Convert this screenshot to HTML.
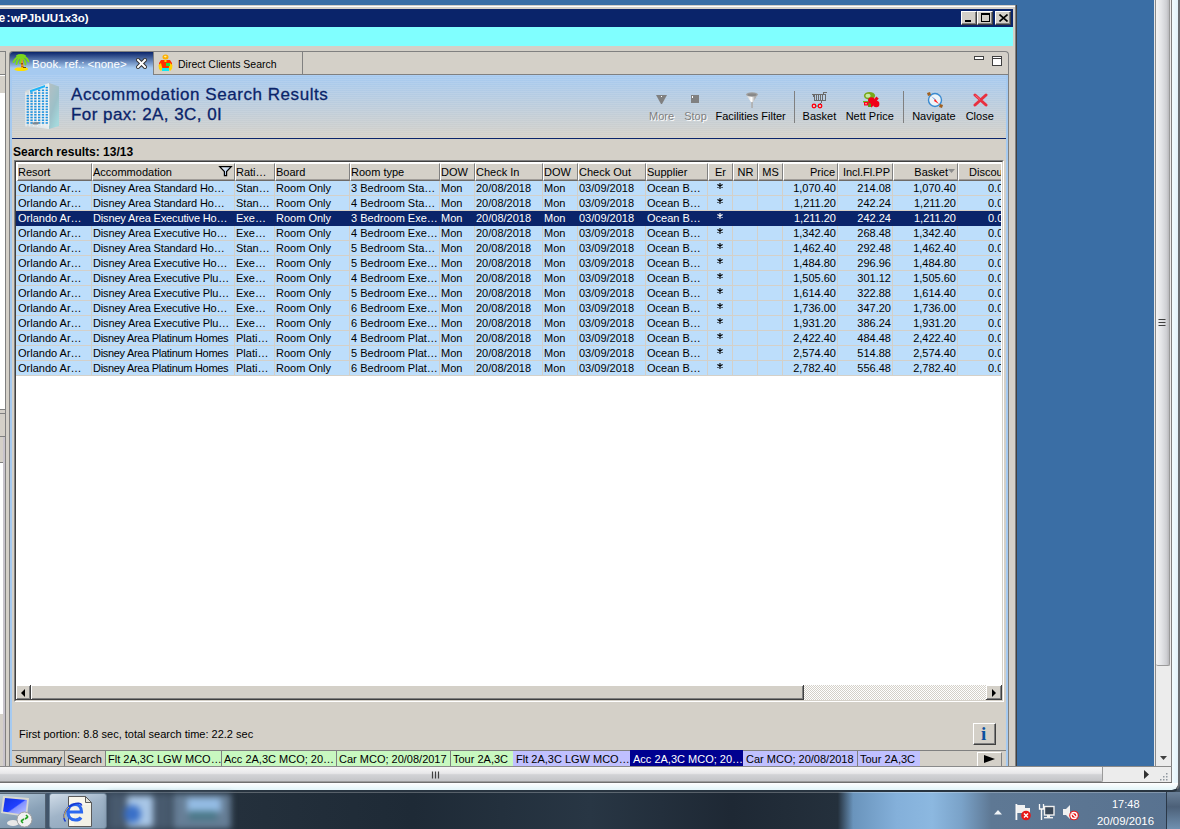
<!DOCTYPE html>
<html><head><meta charset="utf-8"><style>
*{margin:0;padding:0;box-sizing:border-box}
html,body{width:1180px;height:829px;overflow:hidden;background:#3a6ea5;font-family:"Liberation Sans",sans-serif;font-size:11px;color:#000}
.a{position:absolute}
.t{position:absolute;white-space:nowrap;line-height:14px}
.b3{background:#d4d0c8;border-top:1px solid #fff;border-left:1px solid #fff;border-right:1px solid #404040;border-bottom:1px solid #404040;box-shadow:inset -1px -1px 0 #808080}
.sb{background:#d4d0c8;border-right:1px solid #404040;border-bottom:1px solid #404040;box-shadow:inset 1px 1px 0 #fff,inset -1px -1px 0 #808080}
</style></head><body>

<div class="a" style="left:0px;top:5px;width:1017px;height:761px;background:#d4d0c8"></div>
<div class="a" style="left:0px;top:6px;width:1015px;height:1px;background:#fff"></div>
<div class="a" style="left:1015px;top:5px;width:1px;height:761px;background:#808080"></div>
<div class="a" style="left:1016px;top:5px;width:1px;height:761px;background:#404040"></div>
<div class="a" style="left:0px;top:9px;width:1013px;height:18px;background:#0a246a"></div>
<div class="t" style="left:-1.5px;top:11px;color:#fff;font-weight:bold;font-size:12px;line-height:14px">e</div>
<div class="t" style="left:6.5px;top:11px;color:#fff;font-weight:bold;font-size:12px;line-height:14px">:</div>
<div class="t" style="left:11px;top:11px;color:#fff;font-weight:bold;font-size:11.5px;line-height:14px;letter-spacing:0.1px">wPJbUU1x3o)</div>
<div class="a b3" style="left:961px;top:11px;width:16px;height:14px;"></div>
<div class="a b3" style="left:977px;top:11px;width:16px;height:14px;"></div>
<div class="a b3" style="left:995px;top:11px;width:16px;height:14px;"></div>
<div class="a" style="left:965px;top:20px;width:6px;height:2px;background:#000"></div>
<div class="a" style="left:981px;top:13px;width:9px;height:9px;border:1px solid #000;border-top-width:2px"></div>
<svg class="a" style="left:999px;top:14px" width="9" height="8"><path d="M0.5 0.5L8.5 7.5M8.5 0.5L0.5 7.5" stroke="#000" stroke-width="1.6"/></svg>
<div class="a" style="left:0px;top:27px;width:1013px;height:19px;background:#80ffff"></div>
<div class="a" style="left:5px;top:51px;width:1px;height:715px;background:#808080"></div>
<div class="a" style="left:0px;top:51px;width:5px;height:1px;background:#808080"></div>
<div class="a" style="left:0px;top:74px;width:5px;height:1px;background:#808080"></div>
<div class="a" style="left:0px;top:75px;width:5px;height:1px;background:#fff"></div>
<div class="a" style="left:0px;top:93px;width:5px;height:316px;background:#fff"></div>
<div class="a" style="left:0px;top:409px;width:5px;height:1px;background:#808080"></div>
<div class="a" style="left:0px;top:413px;width:5px;height:1px;background:#808080"></div>
<div class="a" style="left:0px;top:436px;width:5px;height:1px;background:#808080"></div>
<div class="a" style="left:0px;top:462px;width:3px;height:1px;background:#808080"></div>
<div class="a" style="left:0px;top:463px;width:3px;height:251px;background:#fff"></div>
<div class="a" style="left:3px;top:437px;width:2px;height:329px;background:#c8c4cc"></div>
<div class="a" style="left:9px;top:51px;width:1000px;height:715px;background:#d4d0c8;border-left:1px solid #808080;border-top:1px solid #808080;border-right:1px solid #808080;border-top-left-radius:4px;border-top-right-radius:4px"></div>
<div class="a" style="left:10px;top:74px;width:998px;height:1px;background:#808080"></div>
<div class="a" style="left:10px;top:52px;width:143px;height:23px;background:linear-gradient(#0a246a 0px,#a6caf0 16px);border-top-left-radius:3px"></div>
<div class="a" style="left:153px;top:52px;width:1px;height:22px;background:#808080"></div>
<div class="a" style="left:302px;top:52px;width:1px;height:22px;background:#808080"></div>
<div class="t" style="left:32px;top:57px;color:#fff;font-size:11.5px">Book. ref.: &lt;none&gt;</div>
<svg class="a" style="left:136px;top:58px" width="11" height="11"><path d="M2 2L9 9M9 2L2 9" stroke="#303030" stroke-width="4" stroke-linecap="square"/><path d="M2 2L9 9M9 2L2 9" stroke="#fff" stroke-width="2" stroke-linecap="square"/></svg>
<svg class="a" style="left:12px;top:53px" width="18" height="19" viewBox="0 0 18 19">
<path d="M9.5 6 C9.5 9 10.5 12 10.5 15" stroke="#e8a018" stroke-width="2.4" fill="none"/>
<rect x="9" y="10" width="2" height="1.5" fill="#a04a10"/><rect x="9.3" y="13" width="2" height="1.2" fill="#c06010"/>
<g fill="none" stroke="#7ad81c" stroke-width="2" stroke-linecap="round">
<path d="M9 4 C6 3.5 3 5.5 1.5 9"/>
<path d="M9 4.5 C6.5 5 5 7 4.5 11"/>
<path d="M9.5 4 C12 3 15 4.5 16.5 8.5"/>
<path d="M9.5 4.5 C12 5.5 13.5 8 13.5 11.5"/>
<path d="M9 4.5 C9 6 8.5 8 8 10"/>
<path d="M5 3 C7 1.5 11 1.5 13 3"/>
</g>
<path d="M2.5 16 L5 14.5 L14 14.5 L16 15.5 L15.5 17 L12 18 L6 18 L2.5 17 Z" fill="#ffe000"/>
<rect x="11" y="14" width="3" height="1" fill="#705000"/>
</svg>
<svg class="a" style="left:158px;top:54px" width="16" height="18" viewBox="0 0 16 18">
<ellipse cx="7.5" cy="3" rx="3" ry="2.5" fill="#ffb000"/>
<ellipse cx="7.3" cy="2.6" rx="1.3" ry="0.8" fill="#fff0a0"/>
<path d="M3 6 L12 6 L14 9 L14 13 L12 15 L3 15 L1 13 L1 9 Z" fill="#ff3000"/>
<rect x="6.5" y="6" width="2" height="2" fill="#ffd000"/>
<path d="M0.5 11 L3 9 L4.5 15 L3 17 L1 15 Z" fill="#ffd000"/>
<path d="M14.5 11 L12 9 L10.5 15 L12 17 L14 15 Z" fill="#ffd000"/>
<rect x="8" y="9" width="4" height="3" fill="#20e040"/>
<rect x="4" y="14" width="7" height="3" fill="#10e8f0"/>
</svg>
<div class="t" style="left:178px;top:57px;font-size:10.5px">Direct Clients Search</div>
<div class="a" style="left:974px;top:56px;width:10px;height:4px;border:1px solid #404040;background:#fff"></div>
<div class="a" style="left:992px;top:56px;width:10px;height:10px;border:1px solid #404040;background:#fff"></div>
<div class="a" style="left:993px;top:58px;width:8px;height:1px;background:#404040"></div>
<div class="a" style="left:10px;top:75px;width:998px;height:63px;background:linear-gradient(#a6caf0,#d4d0c8)"></div>
<div class="a" style="left:10px;top:75px;width:998px;height:63px;background:repeating-linear-gradient(rgba(255,255,255,0.10) 0 1px,rgba(0,0,0,0.0) 1px 2px)"></div>
<div class="a" style="left:12px;top:138px;width:996px;height:1px;background:#0a246a"></div>
<svg class="a" style="left:24px;top:82px" width="36" height="48" viewBox="0 0 36 48">
<defs>
<linearGradient id="bside" x1="0" y1="0" x2="0.6" y2="1"><stop offset="0" stop-color="#b4c0c4"/><stop offset="0.6" stop-color="#9cc0c8"/><stop offset="1" stop-color="#a4d8dc"/></linearGradient>
<linearGradient id="bfront" x1="0" x2="1"><stop offset="0" stop-color="#d0d8dc"/><stop offset="1" stop-color="#e8eef0"/></linearGradient>
</defs>
<path d="M1 9 L25 1 L25 47 L1 44 Z" fill="url(#bfront)"/>
<path d="M25 1 L35 4.5 L35 44 L25 47 Z" fill="url(#bside)"/>
<rect x="1.60" y="10.50" width="0.9" height="34.0" fill="#f4f8fa"/><rect x="5.40" y="9.15" width="0.9" height="35.2" fill="#f4f8fa"/><rect x="9.20" y="7.80" width="0.9" height="36.4" fill="#f4f8fa"/><rect x="13.00" y="6.45" width="0.9" height="37.6" fill="#f4f8fa"/><rect x="16.80" y="5.10" width="0.9" height="38.8" fill="#f4f8fa"/><rect x="20.60" y="3.75" width="0.9" height="40.0" fill="#f4f8fa"/><rect x="24.40" y="2.40" width="0.9" height="41.2" fill="#f4f8fa"/>
<g fill="#1890e0"><rect x="2.60" y="40.20" width="2.3" height="1.5"/><rect x="2.60" y="37.48" width="2.3" height="1.5"/><rect x="2.60" y="34.76" width="2.3" height="1.5"/><rect x="2.60" y="32.04" width="2.3" height="1.5"/><rect x="2.60" y="29.32" width="2.3" height="1.5"/><rect x="2.60" y="26.60" width="2.3" height="1.5"/><rect x="2.60" y="23.88" width="2.3" height="1.5"/><rect x="2.60" y="21.16" width="2.3" height="1.5"/><rect x="2.60" y="18.44" width="2.3" height="1.5"/><rect x="2.60" y="15.72" width="2.3" height="1.5"/><rect x="2.60" y="13.00" width="2.3" height="1.5"/><rect x="6.40" y="40.20" width="2.3" height="1.5"/><rect x="6.40" y="37.48" width="2.3" height="1.5"/><rect x="6.40" y="34.76" width="2.3" height="1.5"/><rect x="6.40" y="32.04" width="2.3" height="1.5"/><rect x="6.40" y="29.32" width="2.3" height="1.5"/><rect x="6.40" y="26.60" width="2.3" height="1.5"/><rect x="6.40" y="23.88" width="2.3" height="1.5"/><rect x="6.40" y="21.16" width="2.3" height="1.5"/><rect x="6.40" y="18.44" width="2.3" height="1.5"/><rect x="6.40" y="15.72" width="2.3" height="1.5"/><rect x="6.40" y="13.00" width="2.3" height="1.5"/><rect x="6.40" y="10.28" width="2.3" height="1.5"/><rect x="10.20" y="40.20" width="2.3" height="1.5"/><rect x="10.20" y="37.48" width="2.3" height="1.5"/><rect x="10.20" y="34.76" width="2.3" height="1.5"/><rect x="10.20" y="32.04" width="2.3" height="1.5"/><rect x="10.20" y="29.32" width="2.3" height="1.5"/><rect x="10.20" y="26.60" width="2.3" height="1.5"/><rect x="10.20" y="23.88" width="2.3" height="1.5"/><rect x="10.20" y="21.16" width="2.3" height="1.5"/><rect x="10.20" y="18.44" width="2.3" height="1.5"/><rect x="10.20" y="15.72" width="2.3" height="1.5"/><rect x="10.20" y="13.00" width="2.3" height="1.5"/><rect x="10.20" y="10.28" width="2.3" height="1.5"/><rect x="14.00" y="40.20" width="2.3" height="1.5"/><rect x="14.00" y="37.48" width="2.3" height="1.5"/><rect x="14.00" y="34.76" width="2.3" height="1.5"/><rect x="14.00" y="32.04" width="2.3" height="1.5"/><rect x="14.00" y="29.32" width="2.3" height="1.5"/><rect x="14.00" y="26.60" width="2.3" height="1.5"/><rect x="14.00" y="23.88" width="2.3" height="1.5"/><rect x="14.00" y="21.16" width="2.3" height="1.5"/><rect x="14.00" y="18.44" width="2.3" height="1.5"/><rect x="14.00" y="15.72" width="2.3" height="1.5"/><rect x="14.00" y="13.00" width="2.3" height="1.5"/><rect x="14.00" y="10.28" width="2.3" height="1.5"/><rect x="14.00" y="7.56" width="2.3" height="1.5"/><rect x="17.80" y="40.20" width="2.3" height="1.5"/><rect x="17.80" y="37.48" width="2.3" height="1.5"/><rect x="17.80" y="34.76" width="2.3" height="1.5"/><rect x="17.80" y="32.04" width="2.3" height="1.5"/><rect x="17.80" y="29.32" width="2.3" height="1.5"/><rect x="17.80" y="26.60" width="2.3" height="1.5"/><rect x="17.80" y="23.88" width="2.3" height="1.5"/><rect x="17.80" y="21.16" width="2.3" height="1.5"/><rect x="17.80" y="18.44" width="2.3" height="1.5"/><rect x="17.80" y="15.72" width="2.3" height="1.5"/><rect x="17.80" y="13.00" width="2.3" height="1.5"/><rect x="17.80" y="10.28" width="2.3" height="1.5"/><rect x="17.80" y="7.56" width="2.3" height="1.5"/><rect x="21.60" y="40.20" width="2.3" height="1.5"/><rect x="21.60" y="37.48" width="2.3" height="1.5"/><rect x="21.60" y="34.76" width="2.3" height="1.5"/><rect x="21.60" y="32.04" width="2.3" height="1.5"/><rect x="21.60" y="29.32" width="2.3" height="1.5"/><rect x="21.60" y="26.60" width="2.3" height="1.5"/><rect x="21.60" y="23.88" width="2.3" height="1.5"/><rect x="21.60" y="21.16" width="2.3" height="1.5"/><rect x="21.60" y="18.44" width="2.3" height="1.5"/><rect x="21.60" y="15.72" width="2.3" height="1.5"/><rect x="21.60" y="13.00" width="2.3" height="1.5"/><rect x="21.60" y="10.28" width="2.3" height="1.5"/><rect x="21.60" y="7.56" width="2.3" height="1.5"/><rect x="21.60" y="4.84" width="2.3" height="1.5"/></g>
<path d="M6 8.2 L21 3 L21 5.2 L6 10.4 Z" fill="#20b4f8"/>
<path d="M8 40.5 L15 40 L14 42.5 L9 42.5 Z" fill="#808890"/>
</svg>
<div class="t" style="left:71px;top:86px;font-size:17px;line-height:18px;color:#0a246a;letter-spacing:0.55px;-webkit-text-stroke:0.3px #0a246a">Accommodation Search Results</div>
<div class="t" style="left:71px;top:106px;font-size:17px;line-height:18px;color:#0a246a;letter-spacing:0.45px;-webkit-text-stroke:0.3px #0a246a">For pax: 2A, 3C, 0I</div>
<div class="t" style="left:601.6px;width:120px;text-align:center;top:109px;color:#808080;text-shadow:1px 1px 0 #fff">More</div>
<div class="t" style="left:635.5px;width:120px;text-align:center;top:109px;color:#808080;text-shadow:1px 1px 0 #fff">Stop</div>
<div class="t" style="left:690.6px;width:120px;text-align:center;top:109px;color:#000">Facilities Filter</div>
<div class="t" style="left:759.4px;width:120px;text-align:center;top:109px;color:#000">Basket</div>
<div class="t" style="left:809.8px;width:120px;text-align:center;top:109px;color:#000">Nett Price</div>
<div class="t" style="left:873.9px;width:120px;text-align:center;top:109px;color:#000">Navigate</div>
<div class="t" style="left:919.7px;width:120px;text-align:center;top:109px;color:#000">Close</div>
<div class="a" style="left:794px;top:91px;width:1px;height:32px;background:#808080"></div>
<div class="a" style="left:903px;top:91px;width:1px;height:32px;background:#808080"></div>
<svg class="a" style="left:656px;top:94px" width="12" height="10" viewBox="0 0 12 10"><path d="M0 1 L11 1 L6 10 L5 10 Z" fill="#808080"/><rect x="5" y="2" width="1" height="1" fill="#fff"/></svg>
<svg class="a" style="left:691px;top:95px" width="8" height="8"><rect width="8" height="8" fill="#808080"/><rect x="1" y="1" width="1" height="2" fill="#fff"/></svg>
<svg class="a" style="left:745px;top:91px" width="14" height="18" viewBox="0 0 14 18">
<defs><linearGradient id="fg" x1="0" x2="1"><stop offset="0" stop-color="#c8c8c8"/><stop offset="0.45" stop-color="#ffffff"/><stop offset="0.75" stop-color="#a8a8a8"/><stop offset="1" stop-color="#c8c8c8"/></linearGradient></defs>
<path d="M1 3.5 L13 3.5 L7.8 11.5 L6.2 11.5 Z" fill="url(#fg)"/>
<ellipse cx="7" cy="3.5" rx="6" ry="2.2" fill="#a0a0a0"/>
<ellipse cx="7" cy="3.8" rx="4.5" ry="1.4" fill="#888"/>
<rect x="6.2" y="11" width="1.7" height="6" fill="#b0b0b0"/>
</svg>
<svg class="a" style="left:811px;top:91px" width="17" height="18" viewBox="0 0 17 18"><g fill="#6a6a6a">
<rect x="1" y="3" width="14" height="1"/><rect x="2" y="3" width="1" height="3"/>
<rect x="3" y="3" width="1" height="7"/><rect x="5" y="3" width="1" height="7"/><rect x="7" y="3" width="1" height="7"/><rect x="9" y="3" width="1" height="7"/><rect x="11" y="3" width="1" height="7"/><rect x="14" y="3" width="1" height="7"/>
<rect x="3" y="9" width="12" height="1"/><rect x="12" y="1" width="1" height="3"/><rect x="12" y="1" width="4" height="1"/>
<rect x="10" y="10" width="1" height="2"/></g><rect x="9" y="12" width="1" height="1" fill="#208080"/>
<circle cx="3" cy="15" r="1.7" fill="#e0ffff" stroke="#ff0010" stroke-width="1.5"/>
<circle cx="9" cy="15" r="1.7" fill="#e0ffff" stroke="#ff0010" stroke-width="1.5"/>
<rect x="5" y="14.6" width="2" height="0.9" fill="#208080"/>
</svg>
<svg class="a" style="left:862px;top:91px" width="18" height="17" viewBox="0 0 18 17">
<ellipse cx="7.5" cy="4.8" rx="5.6" ry="3.8" fill="#78a818"/>
<ellipse cx="6" cy="4.8" rx="2.6" ry="2" fill="#c8e8a0"/>
<rect x="6" y="7" width="3" height="9" fill="#60a020"/>
<rect x="1" y="10" width="6" height="1.5" fill="#70b020"/>
<rect x="2" y="11" width="4.5" height="3.5" fill="#ff0018"/>
<rect x="3" y="12.3" width="2" height="0.9" fill="#ffc0c0"/>
<circle cx="9.5" cy="9.5" r="3.3" fill="#f00018"/>
<circle cx="14.2" cy="13" r="3.2" fill="#f00018"/>
<path d="M15.5 6.5 L8.5 15.5" stroke="#f00018" stroke-width="3"/>
<rect x="7" y="13" width="2" height="3" fill="#50a020"/>
</svg>
<svg class="a" style="left:926px;top:91px" width="18" height="18" viewBox="0 0 18 18">
<circle cx="9" cy="9" r="6.5" fill="#eef4f8" stroke="#3a8ad0" stroke-width="1.4"/>
<path d="M1 2 L4 1 L5 4 L2 5 Z" fill="#a06020"/>
<path d="M14 13 L17 14 L16 17 L13 16 Z" fill="#a06020"/>
<path d="M5 5 L9 8 L10 10 Z" fill="#2a70d0"/>
<path d="M9 8 L13 13 L8 10 Z" fill="#ff2020"/>
</svg>
<svg class="a" style="left:973px;top:93px" width="15" height="14" viewBox="0 0 15 14">
<path d="M2 2 L13 12 M13 2 L2 12" stroke="#e83040" stroke-width="3" stroke-linecap="round"/>
<path d="M2.5 2.5 L7 6.5" stroke="#ff8090" stroke-width="0.8"/>
</svg>
<div class="a" style="left:10px;top:75px;width:2px;height:691px;background:#a6caf0"></div>
<div class="a" style="left:1006px;top:75px;width:2px;height:691px;background:#a6caf0"></div>
<div class="t" style="left:13px;top:145px;font-weight:bold;font-size:12px">Search results: 13/13</div>
<div class="a" style="left:14px;top:160px;width:990px;height:542px;border-top:1px solid #808080;border-left:1px solid #808080;border-right:1px solid #fff;border-bottom:1px solid #fff"></div>
<div class="a" style="left:15px;top:161px;width:988px;height:540px;background:#fff;border-top:1px solid #404040;border-left:1px solid #404040;border-right:1px solid #d4d0c8;border-bottom:1px solid #d4d0c8"></div>
<div class="a" style="left:16px;top:162px;width:985px;height:523px;overflow:hidden;background:#fff">
<div class="a" style="left:1px;top:1px;width:75px;height:18px;background:#d4d0c8;border-top:1px solid #fff;border-left:1px solid #fff;border-right:1px solid #808080;border-bottom:1px solid #6e6a66;box-shadow:inset 0 -1px 0 #a09c98"></div>
<div class="t" style="left:2px;top:3px">Resort</div>
<div class="a" style="left:76px;top:1px;width:143px;height:18px;background:#d4d0c8;border-top:1px solid #fff;border-left:1px solid #fff;border-right:1px solid #808080;border-bottom:1px solid #6e6a66;box-shadow:inset 0 -1px 0 #a09c98"></div>
<div class="t" style="left:77px;top:3px">Accommodation</div>
<div class="a" style="left:219px;top:1px;width:40px;height:18px;background:#d4d0c8;border-top:1px solid #fff;border-left:1px solid #fff;border-right:1px solid #808080;border-bottom:1px solid #6e6a66;box-shadow:inset 0 -1px 0 #a09c98"></div>
<div class="t" style="left:220px;top:3px">Rati…</div>
<div class="a" style="left:259px;top:1px;width:75px;height:18px;background:#d4d0c8;border-top:1px solid #fff;border-left:1px solid #fff;border-right:1px solid #808080;border-bottom:1px solid #6e6a66;box-shadow:inset 0 -1px 0 #a09c98"></div>
<div class="t" style="left:260px;top:3px">Board</div>
<div class="a" style="left:334px;top:1px;width:90px;height:18px;background:#d4d0c8;border-top:1px solid #fff;border-left:1px solid #fff;border-right:1px solid #808080;border-bottom:1px solid #6e6a66;box-shadow:inset 0 -1px 0 #a09c98"></div>
<div class="t" style="left:335px;top:3px">Room type</div>
<div class="a" style="left:424px;top:1px;width:35px;height:18px;background:#d4d0c8;border-top:1px solid #fff;border-left:1px solid #fff;border-right:1px solid #808080;border-bottom:1px solid #6e6a66;box-shadow:inset 0 -1px 0 #a09c98"></div>
<div class="t" style="left:425px;top:3px">DOW</div>
<div class="a" style="left:459px;top:1px;width:68px;height:18px;background:#d4d0c8;border-top:1px solid #fff;border-left:1px solid #fff;border-right:1px solid #808080;border-bottom:1px solid #6e6a66;box-shadow:inset 0 -1px 0 #a09c98"></div>
<div class="t" style="left:460px;top:3px">Check In</div>
<div class="a" style="left:527px;top:1px;width:35px;height:18px;background:#d4d0c8;border-top:1px solid #fff;border-left:1px solid #fff;border-right:1px solid #808080;border-bottom:1px solid #6e6a66;box-shadow:inset 0 -1px 0 #a09c98"></div>
<div class="t" style="left:528px;top:3px">DOW</div>
<div class="a" style="left:562px;top:1px;width:68px;height:18px;background:#d4d0c8;border-top:1px solid #fff;border-left:1px solid #fff;border-right:1px solid #808080;border-bottom:1px solid #6e6a66;box-shadow:inset 0 -1px 0 #a09c98"></div>
<div class="t" style="left:563px;top:3px">Check Out</div>
<div class="a" style="left:630px;top:1px;width:62px;height:18px;background:#d4d0c8;border-top:1px solid #fff;border-left:1px solid #fff;border-right:1px solid #808080;border-bottom:1px solid #6e6a66;box-shadow:inset 0 -1px 0 #a09c98"></div>
<div class="t" style="left:631px;top:3px">Supplier</div>
<div class="a" style="left:692px;top:1px;width:25px;height:18px;background:#d4d0c8;border-top:1px solid #fff;border-left:1px solid #fff;border-right:1px solid #808080;border-bottom:1px solid #6e6a66;box-shadow:inset 0 -1px 0 #a09c98"></div>
<div class="t" style="left:692px;width:25px;text-align:center;top:3px">Er</div>
<div class="a" style="left:717px;top:1px;width:25px;height:18px;background:#d4d0c8;border-top:1px solid #fff;border-left:1px solid #fff;border-right:1px solid #808080;border-bottom:1px solid #6e6a66;box-shadow:inset 0 -1px 0 #a09c98"></div>
<div class="t" style="left:717px;width:25px;text-align:center;top:3px">NR</div>
<div class="a" style="left:742px;top:1px;width:25px;height:18px;background:#d4d0c8;border-top:1px solid #fff;border-left:1px solid #fff;border-right:1px solid #808080;border-bottom:1px solid #6e6a66;box-shadow:inset 0 -1px 0 #a09c98"></div>
<div class="t" style="left:742px;width:25px;text-align:center;top:3px">MS</div>
<div class="a" style="left:767px;top:1px;width:55px;height:18px;background:#d4d0c8;border-top:1px solid #fff;border-left:1px solid #fff;border-right:1px solid #808080;border-bottom:1px solid #6e6a66;box-shadow:inset 0 -1px 0 #a09c98"></div>
<div class="t" style="left:767px;width:52px;text-align:right;top:3px">Price</div>
<div class="a" style="left:822px;top:1px;width:55px;height:18px;background:#d4d0c8;border-top:1px solid #fff;border-left:1px solid #fff;border-right:1px solid #808080;border-bottom:1px solid #6e6a66;box-shadow:inset 0 -1px 0 #a09c98"></div>
<div class="t" style="left:822px;width:52px;text-align:right;top:3px">Incl.Fl.PP</div>
<div class="a" style="left:877px;top:1px;width:65px;height:18px;background:#d4d0c8;border-top:1px solid #fff;border-left:1px solid #fff;border-right:1px solid #808080;border-bottom:1px solid #6e6a66;box-shadow:inset 0 -1px 0 #a09c98"></div>
<div class="t" style="left:877px;width:55px;text-align:right;top:3px">Basket</div>
<div class="a" style="left:942px;top:1px;width:103px;height:18px;background:#d4d0c8;border-top:1px solid #fff;border-left:1px solid #fff;border-right:1px solid #808080;border-bottom:1px solid #6e6a66;box-shadow:inset 0 -1px 0 #a09c98"></div>
<div class="t" style="left:953px;top:3px">Discou</div>
<svg class="a" style="left:932px;top:7px" width="7" height="4"><path d="M0 0H7L3.5 4Z" fill="#8c8c8c"/></svg>
<svg class="a" style="left:202px;top:3px" width="15" height="13"><defs><linearGradient id="ff" x1="0" y1="0" x2="1" y2="1"><stop offset="0" stop-color="#ffffff"/><stop offset="1" stop-color="#88aee0"/></linearGradient></defs><path d="M1.7 1.7H13.3L8.6 6.6V10.6H6.4V6.6Z" fill="url(#ff)" stroke="#000" stroke-width="1.2" stroke-linejoin="miter"/></svg>
<div class="a" style="left:0;top:19px;width:985px;height:14px;background:#bddefb"></div>
<div class="a" style="left:0;top:33px;width:985px;height:1px;background:#d4d0c8"></div>
<div class="a" style="left:75px;top:19px;width:1px;height:14px;background:#d4d0c8"></div>
<div class="a" style="left:218px;top:19px;width:1px;height:14px;background:#d4d0c8"></div>
<div class="a" style="left:258px;top:19px;width:1px;height:14px;background:#d4d0c8"></div>
<div class="a" style="left:333px;top:19px;width:1px;height:14px;background:#d4d0c8"></div>
<div class="a" style="left:423px;top:19px;width:1px;height:14px;background:#d4d0c8"></div>
<div class="a" style="left:458px;top:19px;width:1px;height:14px;background:#d4d0c8"></div>
<div class="a" style="left:526px;top:19px;width:1px;height:14px;background:#d4d0c8"></div>
<div class="a" style="left:561px;top:19px;width:1px;height:14px;background:#d4d0c8"></div>
<div class="a" style="left:629px;top:19px;width:1px;height:14px;background:#d4d0c8"></div>
<div class="a" style="left:691px;top:19px;width:1px;height:14px;background:#d4d0c8"></div>
<div class="a" style="left:716px;top:19px;width:1px;height:14px;background:#d4d0c8"></div>
<div class="a" style="left:741px;top:19px;width:1px;height:14px;background:#d4d0c8"></div>
<div class="a" style="left:766px;top:19px;width:1px;height:14px;background:#d4d0c8"></div>
<div class="a" style="left:821px;top:19px;width:1px;height:14px;background:#d4d0c8"></div>
<div class="a" style="left:876px;top:19px;width:1px;height:14px;background:#d4d0c8"></div>
<div class="a" style="left:941px;top:19px;width:1px;height:14px;background:#d4d0c8"></div>
<div class="t" style="left:2px;top:19px;width:73px;overflow:hidden;color:#000">Orlando Ar…</div>
<div class="t" style="left:77px;top:19px;width:141px;overflow:hidden;color:#000;letter-spacing:-0.15px">Disney Area Standard Ho…</div>
<div class="t" style="left:220px;top:19px;width:38px;overflow:hidden;color:#000">Stan…</div>
<div class="t" style="left:260px;top:19px;width:73px;overflow:hidden;color:#000">Room Only</div>
<div class="t" style="left:335px;top:19px;width:88px;overflow:hidden;color:#000">3 Bedroom Sta…</div>
<div class="t" style="left:425px;top:19px;width:33px;overflow:hidden;color:#000">Mon</div>
<div class="t" style="left:460px;top:19px;width:66px;overflow:hidden;color:#000">20/08/2018</div>
<div class="t" style="left:528px;top:19px;width:33px;overflow:hidden;color:#000">Mon</div>
<div class="t" style="left:563px;top:19px;width:66px;overflow:hidden;color:#000">03/09/2018</div>
<div class="t" style="left:631px;top:19px;width:60px;overflow:hidden;color:#000">Ocean B…</div>
<svg class="a" style="left:701px;top:21px" width="6" height="6"><path d="M3 0V6M0.4 1.5L5.6 4.5M0.4 4.5L5.6 1.5" stroke="#000" stroke-width="1.1"/></svg>
<div class="t" style="left:767px;width:53px;text-align:right;top:19px;color:#000">1,070.40</div>
<div class="t" style="left:822px;width:53px;text-align:right;top:19px;color:#000">214.08</div>
<div class="t" style="left:877px;width:63px;text-align:right;top:19px;color:#000">1,070.40</div>
<div class="t" style="left:972px;top:19px;color:#000">0.0</div>
<div class="a" style="left:0;top:34px;width:985px;height:14px;background:#bddefb"></div>
<div class="a" style="left:0;top:48px;width:985px;height:1px;background:#d4d0c8"></div>
<div class="a" style="left:75px;top:34px;width:1px;height:14px;background:#d4d0c8"></div>
<div class="a" style="left:218px;top:34px;width:1px;height:14px;background:#d4d0c8"></div>
<div class="a" style="left:258px;top:34px;width:1px;height:14px;background:#d4d0c8"></div>
<div class="a" style="left:333px;top:34px;width:1px;height:14px;background:#d4d0c8"></div>
<div class="a" style="left:423px;top:34px;width:1px;height:14px;background:#d4d0c8"></div>
<div class="a" style="left:458px;top:34px;width:1px;height:14px;background:#d4d0c8"></div>
<div class="a" style="left:526px;top:34px;width:1px;height:14px;background:#d4d0c8"></div>
<div class="a" style="left:561px;top:34px;width:1px;height:14px;background:#d4d0c8"></div>
<div class="a" style="left:629px;top:34px;width:1px;height:14px;background:#d4d0c8"></div>
<div class="a" style="left:691px;top:34px;width:1px;height:14px;background:#d4d0c8"></div>
<div class="a" style="left:716px;top:34px;width:1px;height:14px;background:#d4d0c8"></div>
<div class="a" style="left:741px;top:34px;width:1px;height:14px;background:#d4d0c8"></div>
<div class="a" style="left:766px;top:34px;width:1px;height:14px;background:#d4d0c8"></div>
<div class="a" style="left:821px;top:34px;width:1px;height:14px;background:#d4d0c8"></div>
<div class="a" style="left:876px;top:34px;width:1px;height:14px;background:#d4d0c8"></div>
<div class="a" style="left:941px;top:34px;width:1px;height:14px;background:#d4d0c8"></div>
<div class="t" style="left:2px;top:34px;width:73px;overflow:hidden;color:#000">Orlando Ar…</div>
<div class="t" style="left:77px;top:34px;width:141px;overflow:hidden;color:#000;letter-spacing:-0.15px">Disney Area Standard Ho…</div>
<div class="t" style="left:220px;top:34px;width:38px;overflow:hidden;color:#000">Stan…</div>
<div class="t" style="left:260px;top:34px;width:73px;overflow:hidden;color:#000">Room Only</div>
<div class="t" style="left:335px;top:34px;width:88px;overflow:hidden;color:#000">4 Bedroom Sta…</div>
<div class="t" style="left:425px;top:34px;width:33px;overflow:hidden;color:#000">Mon</div>
<div class="t" style="left:460px;top:34px;width:66px;overflow:hidden;color:#000">20/08/2018</div>
<div class="t" style="left:528px;top:34px;width:33px;overflow:hidden;color:#000">Mon</div>
<div class="t" style="left:563px;top:34px;width:66px;overflow:hidden;color:#000">03/09/2018</div>
<div class="t" style="left:631px;top:34px;width:60px;overflow:hidden;color:#000">Ocean B…</div>
<svg class="a" style="left:701px;top:36px" width="6" height="6"><path d="M3 0V6M0.4 1.5L5.6 4.5M0.4 4.5L5.6 1.5" stroke="#000" stroke-width="1.1"/></svg>
<div class="t" style="left:767px;width:53px;text-align:right;top:34px;color:#000">1,211.20</div>
<div class="t" style="left:822px;width:53px;text-align:right;top:34px;color:#000">242.24</div>
<div class="t" style="left:877px;width:63px;text-align:right;top:34px;color:#000">1,211.20</div>
<div class="t" style="left:972px;top:34px;color:#000">0.0</div>
<div class="a" style="left:0;top:49px;width:985px;height:15px;background:#0a246a"></div>
<div class="t" style="left:2px;top:49px;width:73px;overflow:hidden;color:#fff">Orlando Ar…</div>
<div class="t" style="left:77px;top:49px;width:141px;overflow:hidden;color:#fff;letter-spacing:-0.15px">Disney Area Executive Ho…</div>
<div class="t" style="left:220px;top:49px;width:38px;overflow:hidden;color:#fff">Exe…</div>
<div class="t" style="left:260px;top:49px;width:73px;overflow:hidden;color:#fff">Room Only</div>
<div class="t" style="left:335px;top:49px;width:88px;overflow:hidden;color:#fff">3 Bedroom Exe…</div>
<div class="t" style="left:425px;top:49px;width:33px;overflow:hidden;color:#fff">Mon</div>
<div class="t" style="left:460px;top:49px;width:66px;overflow:hidden;color:#fff">20/08/2018</div>
<div class="t" style="left:528px;top:49px;width:33px;overflow:hidden;color:#fff">Mon</div>
<div class="t" style="left:563px;top:49px;width:66px;overflow:hidden;color:#fff">03/09/2018</div>
<div class="t" style="left:631px;top:49px;width:60px;overflow:hidden;color:#fff">Ocean B…</div>
<svg class="a" style="left:701px;top:51px" width="6" height="6"><path d="M3 0V6M0.4 1.5L5.6 4.5M0.4 4.5L5.6 1.5" stroke="#fff" stroke-width="1.1"/></svg>
<div class="t" style="left:767px;width:53px;text-align:right;top:49px;color:#fff">1,211.20</div>
<div class="t" style="left:822px;width:53px;text-align:right;top:49px;color:#fff">242.24</div>
<div class="t" style="left:877px;width:63px;text-align:right;top:49px;color:#fff">1,211.20</div>
<div class="t" style="left:972px;top:49px;color:#fff">0.0</div>
<div class="a" style="left:0;top:64px;width:985px;height:14px;background:#bddefb"></div>
<div class="a" style="left:0;top:78px;width:985px;height:1px;background:#d4d0c8"></div>
<div class="a" style="left:75px;top:64px;width:1px;height:14px;background:#d4d0c8"></div>
<div class="a" style="left:218px;top:64px;width:1px;height:14px;background:#d4d0c8"></div>
<div class="a" style="left:258px;top:64px;width:1px;height:14px;background:#d4d0c8"></div>
<div class="a" style="left:333px;top:64px;width:1px;height:14px;background:#d4d0c8"></div>
<div class="a" style="left:423px;top:64px;width:1px;height:14px;background:#d4d0c8"></div>
<div class="a" style="left:458px;top:64px;width:1px;height:14px;background:#d4d0c8"></div>
<div class="a" style="left:526px;top:64px;width:1px;height:14px;background:#d4d0c8"></div>
<div class="a" style="left:561px;top:64px;width:1px;height:14px;background:#d4d0c8"></div>
<div class="a" style="left:629px;top:64px;width:1px;height:14px;background:#d4d0c8"></div>
<div class="a" style="left:691px;top:64px;width:1px;height:14px;background:#d4d0c8"></div>
<div class="a" style="left:716px;top:64px;width:1px;height:14px;background:#d4d0c8"></div>
<div class="a" style="left:741px;top:64px;width:1px;height:14px;background:#d4d0c8"></div>
<div class="a" style="left:766px;top:64px;width:1px;height:14px;background:#d4d0c8"></div>
<div class="a" style="left:821px;top:64px;width:1px;height:14px;background:#d4d0c8"></div>
<div class="a" style="left:876px;top:64px;width:1px;height:14px;background:#d4d0c8"></div>
<div class="a" style="left:941px;top:64px;width:1px;height:14px;background:#d4d0c8"></div>
<div class="t" style="left:2px;top:64px;width:73px;overflow:hidden;color:#000">Orlando Ar…</div>
<div class="t" style="left:77px;top:64px;width:141px;overflow:hidden;color:#000;letter-spacing:-0.15px">Disney Area Executive Ho…</div>
<div class="t" style="left:220px;top:64px;width:38px;overflow:hidden;color:#000">Exe…</div>
<div class="t" style="left:260px;top:64px;width:73px;overflow:hidden;color:#000">Room Only</div>
<div class="t" style="left:335px;top:64px;width:88px;overflow:hidden;color:#000">4 Bedroom Exe…</div>
<div class="t" style="left:425px;top:64px;width:33px;overflow:hidden;color:#000">Mon</div>
<div class="t" style="left:460px;top:64px;width:66px;overflow:hidden;color:#000">20/08/2018</div>
<div class="t" style="left:528px;top:64px;width:33px;overflow:hidden;color:#000">Mon</div>
<div class="t" style="left:563px;top:64px;width:66px;overflow:hidden;color:#000">03/09/2018</div>
<div class="t" style="left:631px;top:64px;width:60px;overflow:hidden;color:#000">Ocean B…</div>
<svg class="a" style="left:701px;top:66px" width="6" height="6"><path d="M3 0V6M0.4 1.5L5.6 4.5M0.4 4.5L5.6 1.5" stroke="#000" stroke-width="1.1"/></svg>
<div class="t" style="left:767px;width:53px;text-align:right;top:64px;color:#000">1,342.40</div>
<div class="t" style="left:822px;width:53px;text-align:right;top:64px;color:#000">268.48</div>
<div class="t" style="left:877px;width:63px;text-align:right;top:64px;color:#000">1,342.40</div>
<div class="t" style="left:972px;top:64px;color:#000">0.0</div>
<div class="a" style="left:0;top:79px;width:985px;height:14px;background:#bddefb"></div>
<div class="a" style="left:0;top:93px;width:985px;height:1px;background:#d4d0c8"></div>
<div class="a" style="left:75px;top:79px;width:1px;height:14px;background:#d4d0c8"></div>
<div class="a" style="left:218px;top:79px;width:1px;height:14px;background:#d4d0c8"></div>
<div class="a" style="left:258px;top:79px;width:1px;height:14px;background:#d4d0c8"></div>
<div class="a" style="left:333px;top:79px;width:1px;height:14px;background:#d4d0c8"></div>
<div class="a" style="left:423px;top:79px;width:1px;height:14px;background:#d4d0c8"></div>
<div class="a" style="left:458px;top:79px;width:1px;height:14px;background:#d4d0c8"></div>
<div class="a" style="left:526px;top:79px;width:1px;height:14px;background:#d4d0c8"></div>
<div class="a" style="left:561px;top:79px;width:1px;height:14px;background:#d4d0c8"></div>
<div class="a" style="left:629px;top:79px;width:1px;height:14px;background:#d4d0c8"></div>
<div class="a" style="left:691px;top:79px;width:1px;height:14px;background:#d4d0c8"></div>
<div class="a" style="left:716px;top:79px;width:1px;height:14px;background:#d4d0c8"></div>
<div class="a" style="left:741px;top:79px;width:1px;height:14px;background:#d4d0c8"></div>
<div class="a" style="left:766px;top:79px;width:1px;height:14px;background:#d4d0c8"></div>
<div class="a" style="left:821px;top:79px;width:1px;height:14px;background:#d4d0c8"></div>
<div class="a" style="left:876px;top:79px;width:1px;height:14px;background:#d4d0c8"></div>
<div class="a" style="left:941px;top:79px;width:1px;height:14px;background:#d4d0c8"></div>
<div class="t" style="left:2px;top:79px;width:73px;overflow:hidden;color:#000">Orlando Ar…</div>
<div class="t" style="left:77px;top:79px;width:141px;overflow:hidden;color:#000;letter-spacing:-0.15px">Disney Area Standard Ho…</div>
<div class="t" style="left:220px;top:79px;width:38px;overflow:hidden;color:#000">Stan…</div>
<div class="t" style="left:260px;top:79px;width:73px;overflow:hidden;color:#000">Room Only</div>
<div class="t" style="left:335px;top:79px;width:88px;overflow:hidden;color:#000">5 Bedroom Sta…</div>
<div class="t" style="left:425px;top:79px;width:33px;overflow:hidden;color:#000">Mon</div>
<div class="t" style="left:460px;top:79px;width:66px;overflow:hidden;color:#000">20/08/2018</div>
<div class="t" style="left:528px;top:79px;width:33px;overflow:hidden;color:#000">Mon</div>
<div class="t" style="left:563px;top:79px;width:66px;overflow:hidden;color:#000">03/09/2018</div>
<div class="t" style="left:631px;top:79px;width:60px;overflow:hidden;color:#000">Ocean B…</div>
<svg class="a" style="left:701px;top:81px" width="6" height="6"><path d="M3 0V6M0.4 1.5L5.6 4.5M0.4 4.5L5.6 1.5" stroke="#000" stroke-width="1.1"/></svg>
<div class="t" style="left:767px;width:53px;text-align:right;top:79px;color:#000">1,462.40</div>
<div class="t" style="left:822px;width:53px;text-align:right;top:79px;color:#000">292.48</div>
<div class="t" style="left:877px;width:63px;text-align:right;top:79px;color:#000">1,462.40</div>
<div class="t" style="left:972px;top:79px;color:#000">0.0</div>
<div class="a" style="left:0;top:94px;width:985px;height:14px;background:#bddefb"></div>
<div class="a" style="left:0;top:108px;width:985px;height:1px;background:#d4d0c8"></div>
<div class="a" style="left:75px;top:94px;width:1px;height:14px;background:#d4d0c8"></div>
<div class="a" style="left:218px;top:94px;width:1px;height:14px;background:#d4d0c8"></div>
<div class="a" style="left:258px;top:94px;width:1px;height:14px;background:#d4d0c8"></div>
<div class="a" style="left:333px;top:94px;width:1px;height:14px;background:#d4d0c8"></div>
<div class="a" style="left:423px;top:94px;width:1px;height:14px;background:#d4d0c8"></div>
<div class="a" style="left:458px;top:94px;width:1px;height:14px;background:#d4d0c8"></div>
<div class="a" style="left:526px;top:94px;width:1px;height:14px;background:#d4d0c8"></div>
<div class="a" style="left:561px;top:94px;width:1px;height:14px;background:#d4d0c8"></div>
<div class="a" style="left:629px;top:94px;width:1px;height:14px;background:#d4d0c8"></div>
<div class="a" style="left:691px;top:94px;width:1px;height:14px;background:#d4d0c8"></div>
<div class="a" style="left:716px;top:94px;width:1px;height:14px;background:#d4d0c8"></div>
<div class="a" style="left:741px;top:94px;width:1px;height:14px;background:#d4d0c8"></div>
<div class="a" style="left:766px;top:94px;width:1px;height:14px;background:#d4d0c8"></div>
<div class="a" style="left:821px;top:94px;width:1px;height:14px;background:#d4d0c8"></div>
<div class="a" style="left:876px;top:94px;width:1px;height:14px;background:#d4d0c8"></div>
<div class="a" style="left:941px;top:94px;width:1px;height:14px;background:#d4d0c8"></div>
<div class="t" style="left:2px;top:94px;width:73px;overflow:hidden;color:#000">Orlando Ar…</div>
<div class="t" style="left:77px;top:94px;width:141px;overflow:hidden;color:#000;letter-spacing:-0.15px">Disney Area Executive Ho…</div>
<div class="t" style="left:220px;top:94px;width:38px;overflow:hidden;color:#000">Exe…</div>
<div class="t" style="left:260px;top:94px;width:73px;overflow:hidden;color:#000">Room Only</div>
<div class="t" style="left:335px;top:94px;width:88px;overflow:hidden;color:#000">5 Bedroom Exe…</div>
<div class="t" style="left:425px;top:94px;width:33px;overflow:hidden;color:#000">Mon</div>
<div class="t" style="left:460px;top:94px;width:66px;overflow:hidden;color:#000">20/08/2018</div>
<div class="t" style="left:528px;top:94px;width:33px;overflow:hidden;color:#000">Mon</div>
<div class="t" style="left:563px;top:94px;width:66px;overflow:hidden;color:#000">03/09/2018</div>
<div class="t" style="left:631px;top:94px;width:60px;overflow:hidden;color:#000">Ocean B…</div>
<svg class="a" style="left:701px;top:96px" width="6" height="6"><path d="M3 0V6M0.4 1.5L5.6 4.5M0.4 4.5L5.6 1.5" stroke="#000" stroke-width="1.1"/></svg>
<div class="t" style="left:767px;width:53px;text-align:right;top:94px;color:#000">1,484.80</div>
<div class="t" style="left:822px;width:53px;text-align:right;top:94px;color:#000">296.96</div>
<div class="t" style="left:877px;width:63px;text-align:right;top:94px;color:#000">1,484.80</div>
<div class="t" style="left:972px;top:94px;color:#000">0.0</div>
<div class="a" style="left:0;top:109px;width:985px;height:14px;background:#bddefb"></div>
<div class="a" style="left:0;top:123px;width:985px;height:1px;background:#d4d0c8"></div>
<div class="a" style="left:75px;top:109px;width:1px;height:14px;background:#d4d0c8"></div>
<div class="a" style="left:218px;top:109px;width:1px;height:14px;background:#d4d0c8"></div>
<div class="a" style="left:258px;top:109px;width:1px;height:14px;background:#d4d0c8"></div>
<div class="a" style="left:333px;top:109px;width:1px;height:14px;background:#d4d0c8"></div>
<div class="a" style="left:423px;top:109px;width:1px;height:14px;background:#d4d0c8"></div>
<div class="a" style="left:458px;top:109px;width:1px;height:14px;background:#d4d0c8"></div>
<div class="a" style="left:526px;top:109px;width:1px;height:14px;background:#d4d0c8"></div>
<div class="a" style="left:561px;top:109px;width:1px;height:14px;background:#d4d0c8"></div>
<div class="a" style="left:629px;top:109px;width:1px;height:14px;background:#d4d0c8"></div>
<div class="a" style="left:691px;top:109px;width:1px;height:14px;background:#d4d0c8"></div>
<div class="a" style="left:716px;top:109px;width:1px;height:14px;background:#d4d0c8"></div>
<div class="a" style="left:741px;top:109px;width:1px;height:14px;background:#d4d0c8"></div>
<div class="a" style="left:766px;top:109px;width:1px;height:14px;background:#d4d0c8"></div>
<div class="a" style="left:821px;top:109px;width:1px;height:14px;background:#d4d0c8"></div>
<div class="a" style="left:876px;top:109px;width:1px;height:14px;background:#d4d0c8"></div>
<div class="a" style="left:941px;top:109px;width:1px;height:14px;background:#d4d0c8"></div>
<div class="t" style="left:2px;top:109px;width:73px;overflow:hidden;color:#000">Orlando Ar…</div>
<div class="t" style="left:77px;top:109px;width:141px;overflow:hidden;color:#000;letter-spacing:-0.15px">Disney Area Executive Plu…</div>
<div class="t" style="left:220px;top:109px;width:38px;overflow:hidden;color:#000">Exe…</div>
<div class="t" style="left:260px;top:109px;width:73px;overflow:hidden;color:#000">Room Only</div>
<div class="t" style="left:335px;top:109px;width:88px;overflow:hidden;color:#000">4 Bedroom Exe…</div>
<div class="t" style="left:425px;top:109px;width:33px;overflow:hidden;color:#000">Mon</div>
<div class="t" style="left:460px;top:109px;width:66px;overflow:hidden;color:#000">20/08/2018</div>
<div class="t" style="left:528px;top:109px;width:33px;overflow:hidden;color:#000">Mon</div>
<div class="t" style="left:563px;top:109px;width:66px;overflow:hidden;color:#000">03/09/2018</div>
<div class="t" style="left:631px;top:109px;width:60px;overflow:hidden;color:#000">Ocean B…</div>
<svg class="a" style="left:701px;top:111px" width="6" height="6"><path d="M3 0V6M0.4 1.5L5.6 4.5M0.4 4.5L5.6 1.5" stroke="#000" stroke-width="1.1"/></svg>
<div class="t" style="left:767px;width:53px;text-align:right;top:109px;color:#000">1,505.60</div>
<div class="t" style="left:822px;width:53px;text-align:right;top:109px;color:#000">301.12</div>
<div class="t" style="left:877px;width:63px;text-align:right;top:109px;color:#000">1,505.60</div>
<div class="t" style="left:972px;top:109px;color:#000">0.0</div>
<div class="a" style="left:0;top:124px;width:985px;height:14px;background:#bddefb"></div>
<div class="a" style="left:0;top:138px;width:985px;height:1px;background:#d4d0c8"></div>
<div class="a" style="left:75px;top:124px;width:1px;height:14px;background:#d4d0c8"></div>
<div class="a" style="left:218px;top:124px;width:1px;height:14px;background:#d4d0c8"></div>
<div class="a" style="left:258px;top:124px;width:1px;height:14px;background:#d4d0c8"></div>
<div class="a" style="left:333px;top:124px;width:1px;height:14px;background:#d4d0c8"></div>
<div class="a" style="left:423px;top:124px;width:1px;height:14px;background:#d4d0c8"></div>
<div class="a" style="left:458px;top:124px;width:1px;height:14px;background:#d4d0c8"></div>
<div class="a" style="left:526px;top:124px;width:1px;height:14px;background:#d4d0c8"></div>
<div class="a" style="left:561px;top:124px;width:1px;height:14px;background:#d4d0c8"></div>
<div class="a" style="left:629px;top:124px;width:1px;height:14px;background:#d4d0c8"></div>
<div class="a" style="left:691px;top:124px;width:1px;height:14px;background:#d4d0c8"></div>
<div class="a" style="left:716px;top:124px;width:1px;height:14px;background:#d4d0c8"></div>
<div class="a" style="left:741px;top:124px;width:1px;height:14px;background:#d4d0c8"></div>
<div class="a" style="left:766px;top:124px;width:1px;height:14px;background:#d4d0c8"></div>
<div class="a" style="left:821px;top:124px;width:1px;height:14px;background:#d4d0c8"></div>
<div class="a" style="left:876px;top:124px;width:1px;height:14px;background:#d4d0c8"></div>
<div class="a" style="left:941px;top:124px;width:1px;height:14px;background:#d4d0c8"></div>
<div class="t" style="left:2px;top:124px;width:73px;overflow:hidden;color:#000">Orlando Ar…</div>
<div class="t" style="left:77px;top:124px;width:141px;overflow:hidden;color:#000;letter-spacing:-0.15px">Disney Area Executive Plu…</div>
<div class="t" style="left:220px;top:124px;width:38px;overflow:hidden;color:#000">Exe…</div>
<div class="t" style="left:260px;top:124px;width:73px;overflow:hidden;color:#000">Room Only</div>
<div class="t" style="left:335px;top:124px;width:88px;overflow:hidden;color:#000">5 Bedroom Exe…</div>
<div class="t" style="left:425px;top:124px;width:33px;overflow:hidden;color:#000">Mon</div>
<div class="t" style="left:460px;top:124px;width:66px;overflow:hidden;color:#000">20/08/2018</div>
<div class="t" style="left:528px;top:124px;width:33px;overflow:hidden;color:#000">Mon</div>
<div class="t" style="left:563px;top:124px;width:66px;overflow:hidden;color:#000">03/09/2018</div>
<div class="t" style="left:631px;top:124px;width:60px;overflow:hidden;color:#000">Ocean B…</div>
<svg class="a" style="left:701px;top:126px" width="6" height="6"><path d="M3 0V6M0.4 1.5L5.6 4.5M0.4 4.5L5.6 1.5" stroke="#000" stroke-width="1.1"/></svg>
<div class="t" style="left:767px;width:53px;text-align:right;top:124px;color:#000">1,614.40</div>
<div class="t" style="left:822px;width:53px;text-align:right;top:124px;color:#000">322.88</div>
<div class="t" style="left:877px;width:63px;text-align:right;top:124px;color:#000">1,614.40</div>
<div class="t" style="left:972px;top:124px;color:#000">0.0</div>
<div class="a" style="left:0;top:139px;width:985px;height:14px;background:#bddefb"></div>
<div class="a" style="left:0;top:153px;width:985px;height:1px;background:#d4d0c8"></div>
<div class="a" style="left:75px;top:139px;width:1px;height:14px;background:#d4d0c8"></div>
<div class="a" style="left:218px;top:139px;width:1px;height:14px;background:#d4d0c8"></div>
<div class="a" style="left:258px;top:139px;width:1px;height:14px;background:#d4d0c8"></div>
<div class="a" style="left:333px;top:139px;width:1px;height:14px;background:#d4d0c8"></div>
<div class="a" style="left:423px;top:139px;width:1px;height:14px;background:#d4d0c8"></div>
<div class="a" style="left:458px;top:139px;width:1px;height:14px;background:#d4d0c8"></div>
<div class="a" style="left:526px;top:139px;width:1px;height:14px;background:#d4d0c8"></div>
<div class="a" style="left:561px;top:139px;width:1px;height:14px;background:#d4d0c8"></div>
<div class="a" style="left:629px;top:139px;width:1px;height:14px;background:#d4d0c8"></div>
<div class="a" style="left:691px;top:139px;width:1px;height:14px;background:#d4d0c8"></div>
<div class="a" style="left:716px;top:139px;width:1px;height:14px;background:#d4d0c8"></div>
<div class="a" style="left:741px;top:139px;width:1px;height:14px;background:#d4d0c8"></div>
<div class="a" style="left:766px;top:139px;width:1px;height:14px;background:#d4d0c8"></div>
<div class="a" style="left:821px;top:139px;width:1px;height:14px;background:#d4d0c8"></div>
<div class="a" style="left:876px;top:139px;width:1px;height:14px;background:#d4d0c8"></div>
<div class="a" style="left:941px;top:139px;width:1px;height:14px;background:#d4d0c8"></div>
<div class="t" style="left:2px;top:139px;width:73px;overflow:hidden;color:#000">Orlando Ar…</div>
<div class="t" style="left:77px;top:139px;width:141px;overflow:hidden;color:#000;letter-spacing:-0.15px">Disney Area Executive Ho…</div>
<div class="t" style="left:220px;top:139px;width:38px;overflow:hidden;color:#000">Exe…</div>
<div class="t" style="left:260px;top:139px;width:73px;overflow:hidden;color:#000">Room Only</div>
<div class="t" style="left:335px;top:139px;width:88px;overflow:hidden;color:#000">6 Bedroom Exe…</div>
<div class="t" style="left:425px;top:139px;width:33px;overflow:hidden;color:#000">Mon</div>
<div class="t" style="left:460px;top:139px;width:66px;overflow:hidden;color:#000">20/08/2018</div>
<div class="t" style="left:528px;top:139px;width:33px;overflow:hidden;color:#000">Mon</div>
<div class="t" style="left:563px;top:139px;width:66px;overflow:hidden;color:#000">03/09/2018</div>
<div class="t" style="left:631px;top:139px;width:60px;overflow:hidden;color:#000">Ocean B…</div>
<svg class="a" style="left:701px;top:141px" width="6" height="6"><path d="M3 0V6M0.4 1.5L5.6 4.5M0.4 4.5L5.6 1.5" stroke="#000" stroke-width="1.1"/></svg>
<div class="t" style="left:767px;width:53px;text-align:right;top:139px;color:#000">1,736.00</div>
<div class="t" style="left:822px;width:53px;text-align:right;top:139px;color:#000">347.20</div>
<div class="t" style="left:877px;width:63px;text-align:right;top:139px;color:#000">1,736.00</div>
<div class="t" style="left:972px;top:139px;color:#000">0.0</div>
<div class="a" style="left:0;top:154px;width:985px;height:14px;background:#bddefb"></div>
<div class="a" style="left:0;top:168px;width:985px;height:1px;background:#d4d0c8"></div>
<div class="a" style="left:75px;top:154px;width:1px;height:14px;background:#d4d0c8"></div>
<div class="a" style="left:218px;top:154px;width:1px;height:14px;background:#d4d0c8"></div>
<div class="a" style="left:258px;top:154px;width:1px;height:14px;background:#d4d0c8"></div>
<div class="a" style="left:333px;top:154px;width:1px;height:14px;background:#d4d0c8"></div>
<div class="a" style="left:423px;top:154px;width:1px;height:14px;background:#d4d0c8"></div>
<div class="a" style="left:458px;top:154px;width:1px;height:14px;background:#d4d0c8"></div>
<div class="a" style="left:526px;top:154px;width:1px;height:14px;background:#d4d0c8"></div>
<div class="a" style="left:561px;top:154px;width:1px;height:14px;background:#d4d0c8"></div>
<div class="a" style="left:629px;top:154px;width:1px;height:14px;background:#d4d0c8"></div>
<div class="a" style="left:691px;top:154px;width:1px;height:14px;background:#d4d0c8"></div>
<div class="a" style="left:716px;top:154px;width:1px;height:14px;background:#d4d0c8"></div>
<div class="a" style="left:741px;top:154px;width:1px;height:14px;background:#d4d0c8"></div>
<div class="a" style="left:766px;top:154px;width:1px;height:14px;background:#d4d0c8"></div>
<div class="a" style="left:821px;top:154px;width:1px;height:14px;background:#d4d0c8"></div>
<div class="a" style="left:876px;top:154px;width:1px;height:14px;background:#d4d0c8"></div>
<div class="a" style="left:941px;top:154px;width:1px;height:14px;background:#d4d0c8"></div>
<div class="t" style="left:2px;top:154px;width:73px;overflow:hidden;color:#000">Orlando Ar…</div>
<div class="t" style="left:77px;top:154px;width:141px;overflow:hidden;color:#000;letter-spacing:-0.15px">Disney Area Executive Plu…</div>
<div class="t" style="left:220px;top:154px;width:38px;overflow:hidden;color:#000">Exe…</div>
<div class="t" style="left:260px;top:154px;width:73px;overflow:hidden;color:#000">Room Only</div>
<div class="t" style="left:335px;top:154px;width:88px;overflow:hidden;color:#000">6 Bedroom Exe…</div>
<div class="t" style="left:425px;top:154px;width:33px;overflow:hidden;color:#000">Mon</div>
<div class="t" style="left:460px;top:154px;width:66px;overflow:hidden;color:#000">20/08/2018</div>
<div class="t" style="left:528px;top:154px;width:33px;overflow:hidden;color:#000">Mon</div>
<div class="t" style="left:563px;top:154px;width:66px;overflow:hidden;color:#000">03/09/2018</div>
<div class="t" style="left:631px;top:154px;width:60px;overflow:hidden;color:#000">Ocean B…</div>
<svg class="a" style="left:701px;top:156px" width="6" height="6"><path d="M3 0V6M0.4 1.5L5.6 4.5M0.4 4.5L5.6 1.5" stroke="#000" stroke-width="1.1"/></svg>
<div class="t" style="left:767px;width:53px;text-align:right;top:154px;color:#000">1,931.20</div>
<div class="t" style="left:822px;width:53px;text-align:right;top:154px;color:#000">386.24</div>
<div class="t" style="left:877px;width:63px;text-align:right;top:154px;color:#000">1,931.20</div>
<div class="t" style="left:972px;top:154px;color:#000">0.0</div>
<div class="a" style="left:0;top:169px;width:985px;height:14px;background:#bddefb"></div>
<div class="a" style="left:0;top:183px;width:985px;height:1px;background:#d4d0c8"></div>
<div class="a" style="left:75px;top:169px;width:1px;height:14px;background:#d4d0c8"></div>
<div class="a" style="left:218px;top:169px;width:1px;height:14px;background:#d4d0c8"></div>
<div class="a" style="left:258px;top:169px;width:1px;height:14px;background:#d4d0c8"></div>
<div class="a" style="left:333px;top:169px;width:1px;height:14px;background:#d4d0c8"></div>
<div class="a" style="left:423px;top:169px;width:1px;height:14px;background:#d4d0c8"></div>
<div class="a" style="left:458px;top:169px;width:1px;height:14px;background:#d4d0c8"></div>
<div class="a" style="left:526px;top:169px;width:1px;height:14px;background:#d4d0c8"></div>
<div class="a" style="left:561px;top:169px;width:1px;height:14px;background:#d4d0c8"></div>
<div class="a" style="left:629px;top:169px;width:1px;height:14px;background:#d4d0c8"></div>
<div class="a" style="left:691px;top:169px;width:1px;height:14px;background:#d4d0c8"></div>
<div class="a" style="left:716px;top:169px;width:1px;height:14px;background:#d4d0c8"></div>
<div class="a" style="left:741px;top:169px;width:1px;height:14px;background:#d4d0c8"></div>
<div class="a" style="left:766px;top:169px;width:1px;height:14px;background:#d4d0c8"></div>
<div class="a" style="left:821px;top:169px;width:1px;height:14px;background:#d4d0c8"></div>
<div class="a" style="left:876px;top:169px;width:1px;height:14px;background:#d4d0c8"></div>
<div class="a" style="left:941px;top:169px;width:1px;height:14px;background:#d4d0c8"></div>
<div class="t" style="left:2px;top:169px;width:73px;overflow:hidden;color:#000">Orlando Ar…</div>
<div class="t" style="left:77px;top:169px;width:141px;overflow:hidden;color:#000;letter-spacing:-0.3px">Disney Area Platinum Homes</div>
<div class="t" style="left:220px;top:169px;width:38px;overflow:hidden;color:#000">Plati…</div>
<div class="t" style="left:260px;top:169px;width:73px;overflow:hidden;color:#000">Room Only</div>
<div class="t" style="left:335px;top:169px;width:88px;overflow:hidden;color:#000">4 Bedroom Plat…</div>
<div class="t" style="left:425px;top:169px;width:33px;overflow:hidden;color:#000">Mon</div>
<div class="t" style="left:460px;top:169px;width:66px;overflow:hidden;color:#000">20/08/2018</div>
<div class="t" style="left:528px;top:169px;width:33px;overflow:hidden;color:#000">Mon</div>
<div class="t" style="left:563px;top:169px;width:66px;overflow:hidden;color:#000">03/09/2018</div>
<div class="t" style="left:631px;top:169px;width:60px;overflow:hidden;color:#000">Ocean B…</div>
<svg class="a" style="left:701px;top:171px" width="6" height="6"><path d="M3 0V6M0.4 1.5L5.6 4.5M0.4 4.5L5.6 1.5" stroke="#000" stroke-width="1.1"/></svg>
<div class="t" style="left:767px;width:53px;text-align:right;top:169px;color:#000">2,422.40</div>
<div class="t" style="left:822px;width:53px;text-align:right;top:169px;color:#000">484.48</div>
<div class="t" style="left:877px;width:63px;text-align:right;top:169px;color:#000">2,422.40</div>
<div class="t" style="left:972px;top:169px;color:#000">0.0</div>
<div class="a" style="left:0;top:184px;width:985px;height:14px;background:#bddefb"></div>
<div class="a" style="left:0;top:198px;width:985px;height:1px;background:#d4d0c8"></div>
<div class="a" style="left:75px;top:184px;width:1px;height:14px;background:#d4d0c8"></div>
<div class="a" style="left:218px;top:184px;width:1px;height:14px;background:#d4d0c8"></div>
<div class="a" style="left:258px;top:184px;width:1px;height:14px;background:#d4d0c8"></div>
<div class="a" style="left:333px;top:184px;width:1px;height:14px;background:#d4d0c8"></div>
<div class="a" style="left:423px;top:184px;width:1px;height:14px;background:#d4d0c8"></div>
<div class="a" style="left:458px;top:184px;width:1px;height:14px;background:#d4d0c8"></div>
<div class="a" style="left:526px;top:184px;width:1px;height:14px;background:#d4d0c8"></div>
<div class="a" style="left:561px;top:184px;width:1px;height:14px;background:#d4d0c8"></div>
<div class="a" style="left:629px;top:184px;width:1px;height:14px;background:#d4d0c8"></div>
<div class="a" style="left:691px;top:184px;width:1px;height:14px;background:#d4d0c8"></div>
<div class="a" style="left:716px;top:184px;width:1px;height:14px;background:#d4d0c8"></div>
<div class="a" style="left:741px;top:184px;width:1px;height:14px;background:#d4d0c8"></div>
<div class="a" style="left:766px;top:184px;width:1px;height:14px;background:#d4d0c8"></div>
<div class="a" style="left:821px;top:184px;width:1px;height:14px;background:#d4d0c8"></div>
<div class="a" style="left:876px;top:184px;width:1px;height:14px;background:#d4d0c8"></div>
<div class="a" style="left:941px;top:184px;width:1px;height:14px;background:#d4d0c8"></div>
<div class="t" style="left:2px;top:184px;width:73px;overflow:hidden;color:#000">Orlando Ar…</div>
<div class="t" style="left:77px;top:184px;width:141px;overflow:hidden;color:#000;letter-spacing:-0.3px">Disney Area Platinum Homes</div>
<div class="t" style="left:220px;top:184px;width:38px;overflow:hidden;color:#000">Plati…</div>
<div class="t" style="left:260px;top:184px;width:73px;overflow:hidden;color:#000">Room Only</div>
<div class="t" style="left:335px;top:184px;width:88px;overflow:hidden;color:#000">5 Bedroom Plat…</div>
<div class="t" style="left:425px;top:184px;width:33px;overflow:hidden;color:#000">Mon</div>
<div class="t" style="left:460px;top:184px;width:66px;overflow:hidden;color:#000">20/08/2018</div>
<div class="t" style="left:528px;top:184px;width:33px;overflow:hidden;color:#000">Mon</div>
<div class="t" style="left:563px;top:184px;width:66px;overflow:hidden;color:#000">03/09/2018</div>
<div class="t" style="left:631px;top:184px;width:60px;overflow:hidden;color:#000">Ocean B…</div>
<svg class="a" style="left:701px;top:186px" width="6" height="6"><path d="M3 0V6M0.4 1.5L5.6 4.5M0.4 4.5L5.6 1.5" stroke="#000" stroke-width="1.1"/></svg>
<div class="t" style="left:767px;width:53px;text-align:right;top:184px;color:#000">2,574.40</div>
<div class="t" style="left:822px;width:53px;text-align:right;top:184px;color:#000">514.88</div>
<div class="t" style="left:877px;width:63px;text-align:right;top:184px;color:#000">2,574.40</div>
<div class="t" style="left:972px;top:184px;color:#000">0.0</div>
<div class="a" style="left:0;top:199px;width:985px;height:14px;background:#bddefb"></div>
<div class="a" style="left:0;top:213px;width:985px;height:1px;background:#d4d0c8"></div>
<div class="a" style="left:75px;top:199px;width:1px;height:14px;background:#d4d0c8"></div>
<div class="a" style="left:218px;top:199px;width:1px;height:14px;background:#d4d0c8"></div>
<div class="a" style="left:258px;top:199px;width:1px;height:14px;background:#d4d0c8"></div>
<div class="a" style="left:333px;top:199px;width:1px;height:14px;background:#d4d0c8"></div>
<div class="a" style="left:423px;top:199px;width:1px;height:14px;background:#d4d0c8"></div>
<div class="a" style="left:458px;top:199px;width:1px;height:14px;background:#d4d0c8"></div>
<div class="a" style="left:526px;top:199px;width:1px;height:14px;background:#d4d0c8"></div>
<div class="a" style="left:561px;top:199px;width:1px;height:14px;background:#d4d0c8"></div>
<div class="a" style="left:629px;top:199px;width:1px;height:14px;background:#d4d0c8"></div>
<div class="a" style="left:691px;top:199px;width:1px;height:14px;background:#d4d0c8"></div>
<div class="a" style="left:716px;top:199px;width:1px;height:14px;background:#d4d0c8"></div>
<div class="a" style="left:741px;top:199px;width:1px;height:14px;background:#d4d0c8"></div>
<div class="a" style="left:766px;top:199px;width:1px;height:14px;background:#d4d0c8"></div>
<div class="a" style="left:821px;top:199px;width:1px;height:14px;background:#d4d0c8"></div>
<div class="a" style="left:876px;top:199px;width:1px;height:14px;background:#d4d0c8"></div>
<div class="a" style="left:941px;top:199px;width:1px;height:14px;background:#d4d0c8"></div>
<div class="t" style="left:2px;top:199px;width:73px;overflow:hidden;color:#000">Orlando Ar…</div>
<div class="t" style="left:77px;top:199px;width:141px;overflow:hidden;color:#000;letter-spacing:-0.3px">Disney Area Platinum Homes</div>
<div class="t" style="left:220px;top:199px;width:38px;overflow:hidden;color:#000">Plati…</div>
<div class="t" style="left:260px;top:199px;width:73px;overflow:hidden;color:#000">Room Only</div>
<div class="t" style="left:335px;top:199px;width:88px;overflow:hidden;color:#000">6 Bedroom Plat…</div>
<div class="t" style="left:425px;top:199px;width:33px;overflow:hidden;color:#000">Mon</div>
<div class="t" style="left:460px;top:199px;width:66px;overflow:hidden;color:#000">20/08/2018</div>
<div class="t" style="left:528px;top:199px;width:33px;overflow:hidden;color:#000">Mon</div>
<div class="t" style="left:563px;top:199px;width:66px;overflow:hidden;color:#000">03/09/2018</div>
<div class="t" style="left:631px;top:199px;width:60px;overflow:hidden;color:#000">Ocean B…</div>
<svg class="a" style="left:701px;top:201px" width="6" height="6"><path d="M3 0V6M0.4 1.5L5.6 4.5M0.4 4.5L5.6 1.5" stroke="#000" stroke-width="1.1"/></svg>
<div class="t" style="left:767px;width:53px;text-align:right;top:199px;color:#000">2,782.40</div>
<div class="t" style="left:822px;width:53px;text-align:right;top:199px;color:#000">556.48</div>
<div class="t" style="left:877px;width:63px;text-align:right;top:199px;color:#000">2,782.40</div>
<div class="t" style="left:972px;top:199px;color:#000">0.0</div>
</div>
<div class="a" style="left:16px;top:685px;width:985px;height:15px;background-color:#fff;background-image:repeating-conic-gradient(#d4d0c8 0 25%,#fff 0 50%);background-size:2px 2px"></div>
<div class="a sb" style="left:16px;top:685px;width:15px;height:15px;"></div>
<div class="a sb" style="left:31px;top:685px;width:773px;height:15px;"></div>
<div class="a sb" style="left:986px;top:685px;width:16px;height:15px;"></div>
<svg class="a" style="left:21px;top:689px" width="5" height="8"><path d="M4 0L0 4L4 8Z" fill="#000"/></svg>
<svg class="a" style="left:992px;top:689px" width="5" height="8"><path d="M0 0L4 4L0 8Z" fill="#000"/></svg>
<div class="t" style="left:19px;top:727px;">First portion: 8.8 sec, total search time: 22.2 sec</div>
<div class="a b3" style="left:973px;top:723px;width:23px;height:22px;"></div>
<div class="t" style="left:981px;top:724px;font-family:'Liberation Serif',serif;font-weight:bold;font-size:19px;line-height:20px;color:#0a50a0">i</div>
<div class="a" style="left:12px;top:750px;width:994px;height:1px;background:#808080"></div>
<div class="a" style="left:12px;top:751px;width:52px;height:15px;background:#d4d0c8"></div>
<div class="a" style="left:64px;top:751px;width:41px;height:15px;background:#d4d0c8"></div>
<div class="a" style="left:105px;top:751px;width:116px;height:15px;background:#c8f8c0"></div>
<div class="a" style="left:221px;top:751px;width:115px;height:15px;background:#c8f8c0"></div>
<div class="a" style="left:336px;top:751px;width:114px;height:15px;background:#c8f8c0"></div>
<div class="a" style="left:450px;top:751px;width:63px;height:15px;background:#c8f8c0"></div>
<div class="a" style="left:513px;top:751px;width:117px;height:15px;background:#c0c0ff"></div>
<div class="a" style="left:630px;top:750px;width:113px;height:16px;background:#000090"></div>
<div class="a" style="left:743px;top:751px;width:114px;height:15px;background:#c0c0ff"></div>
<div class="a" style="left:857px;top:751px;width:63px;height:15px;background:#c0c0ff"></div>
<div class="a" style="left:64px;top:751px;width:1px;height:15px;background:#808080"></div>
<div class="t" style="left:15px;top:752px;color:#000">Summary</div>
<div class="a" style="left:105px;top:751px;width:1px;height:15px;background:#808080"></div>
<div class="t" style="left:67px;top:752px;color:#000">Search</div>
<div class="a" style="left:221px;top:751px;width:1px;height:15px;background:#808080"></div>
<div class="t" style="left:108px;top:752px;color:#000">Flt 2A,3C LGW MCO…</div>
<div class="a" style="left:336px;top:751px;width:1px;height:15px;background:#808080"></div>
<div class="t" style="left:224px;top:752px;color:#000">Acc 2A,3C MCO; 20…</div>
<div class="a" style="left:450px;top:751px;width:1px;height:15px;background:#808080"></div>
<div class="t" style="left:339px;top:752px;color:#000">Car MCO; 20/08/2017</div>
<div class="t" style="left:453px;top:752px;color:#000">Tour 2A,3C</div>
<div class="t" style="left:516px;top:752px;color:#000">Flt 2A,3C LGW MCO…</div>
<div class="t" style="left:633px;top:752px;color:#fff">Acc 2A,3C MCO; 20…</div>
<div class="a" style="left:857px;top:751px;width:1px;height:15px;background:#808080"></div>
<div class="t" style="left:746px;top:752px;color:#000">Car MCO; 20/08/2018</div>
<div class="t" style="left:860px;top:752px;color:#000">Tour 2A,3C</div>
<div class="a" style="left:977px;top:752px;width:25px;height:14px;background:#d4d0c8;border-top:1px solid #fff;border-left:1px solid #fff;border-right:1px solid #808080"></div>
<svg class="a" style="left:984px;top:755px" width="11" height="8"><path d="M0 0L11 4L0 8Z" fill="#000"/></svg>
<div class="a" style="left:1154px;top:0px;width:18px;height:767px;background:#ececec"></div>
<div class="a" style="left:1154px;top:0px;width:1px;height:767px;background:#e8e8e8"></div>
<div class="a" style="left:1155px;top:0px;width:1px;height:767px;background:#8a8a8a"></div>
<div class="a" style="left:1156px;top:0px;width:14px;height:666px;background:linear-gradient(90deg,#f4f4f4,#e4e5e8 40%,#cfd0d4 80%,#b8b8bc);border-right:1px solid #9a9a9a;border-bottom:1px solid #9a9a9a;border-radius:0 0 2px 2px"></div>
<svg class="a" style="left:1158px;top:318px" width="8" height="9"><path d="M0.5 1.5H7.5M0.5 4.5H7.5M0.5 7.5H7.5" stroke="#404040" stroke-width="1.2"/></svg>
<svg class="a" style="left:1160px;top:756px" width="7" height="4"><path d="M0 0H7L3.5 4Z" fill="#404040"/></svg>
<div class="a" style="left:1171px;top:0px;width:1px;height:783px;background:#808080"></div>
<div class="a" style="left:1170px;top:784px;width:10px;height:8px;background:#3c4c5c"></div>
<div class="a" style="left:1172px;top:0px;width:6px;height:786px;background:linear-gradient(90deg,#f2fcfe,#e2f2fa)"></div>
<div class="a" style="left:0px;top:766px;width:1172px;height:1px;background:#8a8a8a"></div>
<div class="a" style="left:0px;top:767px;width:1171px;height:15px;background:#ececec"></div>
<div class="a" style="left:0px;top:767px;width:1103px;height:15px;background:linear-gradient(#f6f6f6,#e8e8ea 45%,#d2d3d6 55%,#c4c5c8);border-right:1px solid #9a9a9a;border-bottom:1px solid #9a9a9a;border-radius:0 0 2px 0"></div>
<svg class="a" style="left:431px;top:771px" width="9" height="8"><path d="M1.5 0.5V7.5M4.5 0.5V7.5M7.5 0.5V7.5" stroke="#404040" stroke-width="1.2"/></svg>
<svg class="a" style="left:1144px;top:770px" width="5" height="9"><path d="M0 0L5 4.5L0 9Z" fill="#303030"/></svg>
<svg class="a" style="left:1159px;top:772px" width="10" height="10"><g fill="#9098a0"><rect x="7" y="1" width="1.5" height="1.5"/><rect x="4" y="4" width="1.5" height="1.5"/><rect x="7" y="4" width="1.5" height="1.5"/><rect x="1" y="7" width="1.5" height="1.5"/><rect x="4" y="7" width="1.5" height="1.5"/><rect x="7" y="7" width="1.5" height="1.5"/></g></svg>
<div class="a" style="left:0px;top:782px;width:1172px;height:1px;background:#707070"></div>
<div class="a" style="left:0px;top:783px;width:1178px;height:7px;background:linear-gradient(#ffffff,#e2f4f8);border-bottom-right-radius:6px"></div>
<div class="a" style="left:-10px;top:-10px;width:1190px;height:802px;border-right:2px solid #6a6e72;border-bottom:2px solid #283440;border-bottom-right-radius:8px"></div>
<div class="a" style="left:0px;top:792px;width:1180px;height:37px;background:linear-gradient(90deg,#4a6078 0,#38485a 9%,#24303c 20%,#1e2a36 35%,#283644 50%,#1e2834 62%,#24303c 71%,#6a94bc 72.3%,#84b0da 76%,#8cb8e0 79%,#7aa2c8 81.5%,#5e7894 84%,#587290 100%)"></div>
<div class="a" style="left:0px;top:792px;width:1180px;height:1px;background:rgba(255,255,255,0.25)"></div>
<div class="a" style="left:0px;top:793px;width:46px;height:36px;background:linear-gradient(160deg,#b4c8d8,#8aa2b8 55%,#7890a6);border:1px solid #506070;border-left:none"></div>
<div class="a" style="left:49px;top:793px;width:58px;height:36px;background:linear-gradient(160deg,#d0dce8,#a0b4c8 45%,#8aa2b8);border:1px solid #6a8094;border-radius:3px"></div>
<svg class="a" style="left:1px;top:795px" width="33" height="33" viewBox="0 0 33 33">
<defs><linearGradient id="scr" x1="0" y1="0" x2="1" y2="1"><stop offset="0" stop-color="#1030e0"/><stop offset="0.5" stop-color="#2040ff"/><stop offset="0.55" stop-color="#8090ff"/><stop offset="1" stop-color="#c0c8ff"/></linearGradient></defs>
<path d="M2 1 L28 3 L26 22 L0 18 Z" fill="#d8d8d0"/>
<path d="M4 3 L26 5 L24.5 20 L2 16.5 Z" fill="url(#scr)"/>
<ellipse cx="12" cy="28" rx="6" ry="3" fill="#e8e8e8"/>
<circle cx="23.5" cy="24.5" r="7.5" fill="#f0f0f0" stroke="#a0a0a0" stroke-width="1"/>
<path d="M20 26 L23 24 M20 26 L22 28 M27 22 L24 24 M27 22 L25 20" stroke="#20a020" stroke-width="1.6"/>
</svg>
<svg class="a" style="left:58px;top:793px" width="40" height="36" viewBox="0 0 40 36">
<path d="M10.5 3.5 H27.5 L33.5 9.5 V33.5 H10.5 Z" fill="#f8f6ec" stroke="#5a5a5a" stroke-width="1"/>
<path d="M27.5 3.5 V9.5 H33.5 Z" fill="#e4e4dc" stroke="#5a5a5a" stroke-width="1"/>
<path d="M16 12 L33 12 L33 33 L16 33 Z" fill="#ecebe2" opacity="0.5"/>
<path d="M11 19 H23.5 C23.5 14 20.5 11.5 17 11.5 C12.5 11.5 10 15 10 19.5 C10 24 13 27 17.5 27 C20 27 22 26 23 24.5" fill="none" stroke="#2a68f0" stroke-width="3.2"/>
<path d="M7.5 28.5 C4 24 7 15 15 11.5 C19.5 9.5 23 10 23.8 12.5" fill="none" stroke="#1838d0" stroke-width="1.5"/>
<path d="M6 25 C6 20 8.5 16 11 14" fill="none" stroke="#e8c040" stroke-width="1"/>
</svg>
<div class="a" style="left:107px;top:793px;width:126px;height:36px;filter:blur(3px)"><div class="a" style="left:2px;top:1px;width:62px;height:35px;background:#485a6e"></div><div class="a" style="left:20px;top:3px;width:26px;height:31px;border-radius:3px;background:#a8c6e6"></div><div class="a" style="left:17px;top:12px;width:17px;height:18px;border-radius:9px;background:#3a70c8"></div><div class="a" style="left:66px;top:1px;width:58px;height:35px;background:#667e96"></div><div class="a" style="left:80px;top:5px;width:34px;height:14px;background:#94bce4"></div><div class="a" style="left:82px;top:18px;width:28px;height:9px;background:#4a7888"></div></div>
<svg class="a" style="left:990px;top:802px" width="95" height="22" viewBox="0 0 95 22">
<path d="M4 12.5 L8 8 L12 12.5 Z" fill="#f0f4f8"/>
<rect x="25.5" y="2" width="1.8" height="16" fill="#f8f8f8"/>
<path d="M27 3 L35 3 L35 6 L40 6 L40 11 L27 11 Z" fill="#f0f0f0"/>
<circle cx="36" cy="13.5" r="4.8" fill="#e81818"/>
<path d="M34 11.5 L38 15.5 M38 11.5 L34 15.5" stroke="#fff" stroke-width="1.4"/>
<path d="M51.5 7 V18" stroke="#f8f8f8" stroke-width="1.4"/>
<path d="M49.5 2 V7 H53.5 V2" stroke="#f8f8f8" stroke-width="1.3" fill="none"/>
<rect x="54.5" y="4.5" width="9.5" height="8.5" fill="#3a4858" stroke="#f0f0f0" stroke-width="1.4"/>
<rect x="57" y="13" width="3" height="2" fill="#f0f0f0"/>
<rect x="54" y="15" width="9" height="1.4" fill="#f0f0f0"/>
<path d="M73 7 L76 7 L80 3 L80 17 L76 13 L73 13 Z" fill="#f0f0f0"/>
<circle cx="84" cy="13.5" r="4.8" fill="#e81818"/>
<circle cx="84" cy="13.5" r="3" fill="none" stroke="#fff" stroke-width="1.4"/>
<path d="M81.8 11.3 L86.2 15.7" stroke="#e81818" stroke-width="1.2"/>
<path d="M82 11.5 L86 15.5" stroke="#fff" stroke-width="1.3"/>
</svg>
<div class="t" style="left:1112px;top:797px;color:#fff;font-size:11px">17:48</div>
<div class="t" style="left:1097px;top:814px;color:#fff;font-size:11.4px">20/09/2016</div>
<div class="a" style="left:1166px;top:792px;width:14px;height:37px;background:linear-gradient(#6a8098,#4c6078 40%,#7090b0);border-left:1px solid #2a3848"></div>
</body></html>
